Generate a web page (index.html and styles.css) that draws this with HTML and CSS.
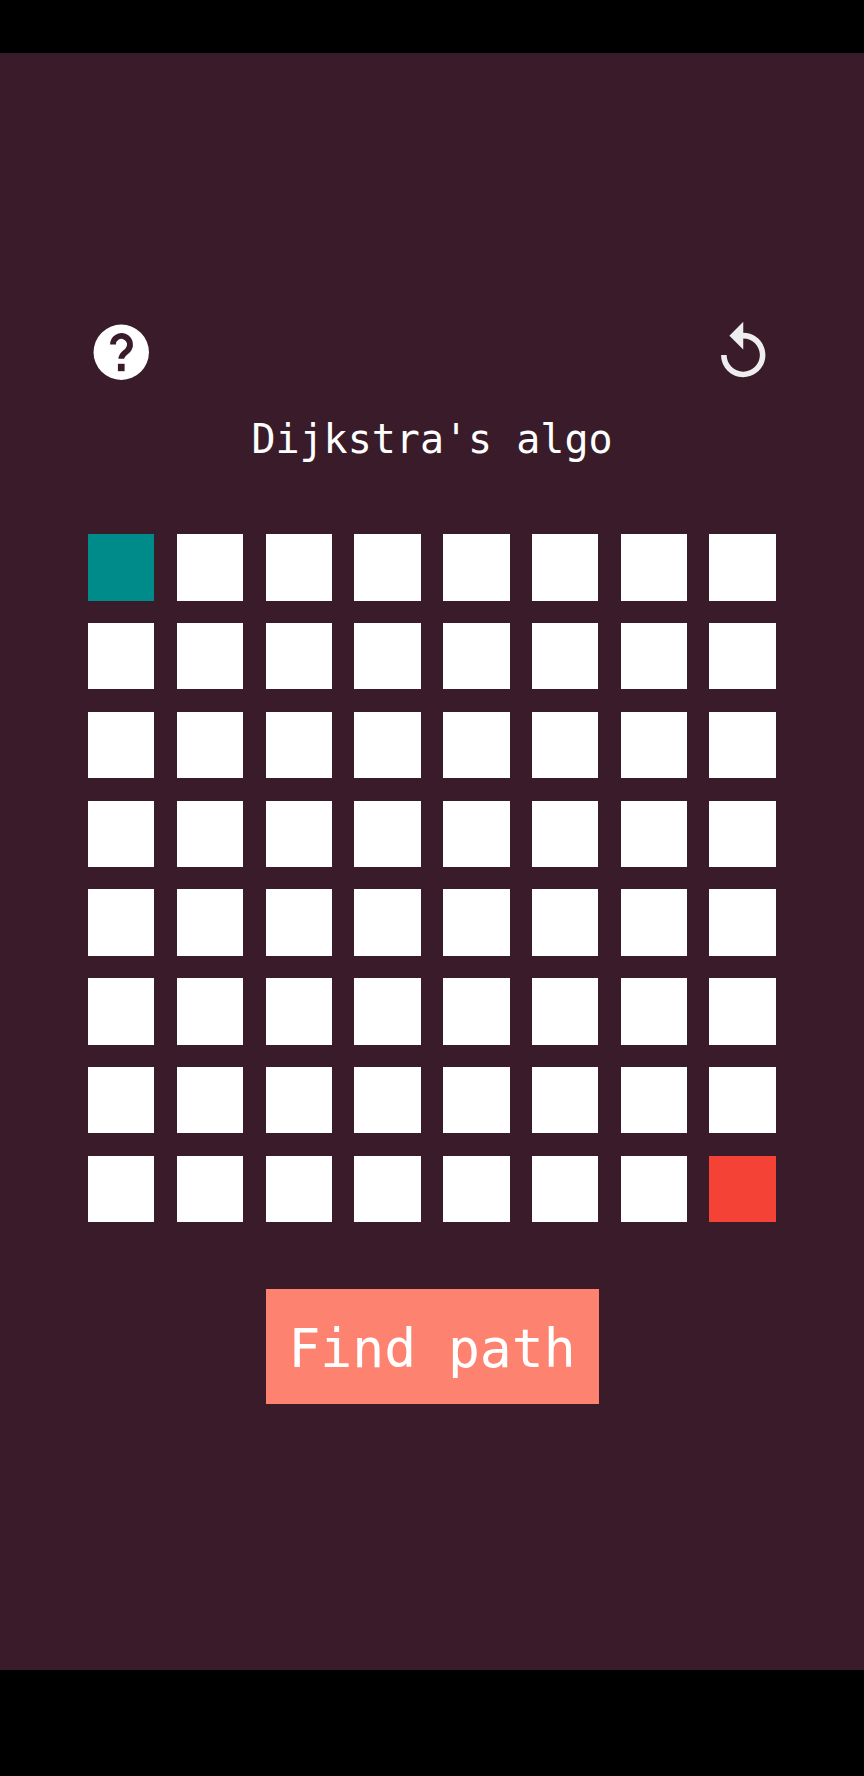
FILE: index.html
```html
<!DOCTYPE html>
<html lang="en">
<head>
    <meta charset="UTF-8">
    <meta name="viewport" content="width=device-width, initial-scale=1.0">
    <title>Dijkstra's algo</title>
    <link rel="stylesheet" href="styles.css">
</head>
<body>

    <div class="screen">
        <div class="toolbar">
            <svg class="icon" viewBox="0 0 66.5 66.5" aria-label="Help">
                <circle cx="33.25" cy="33.25" r="27.7" fill="#fff"/>
                <path class="question" d="M25 25.5a8.5 8.5 0 1 1 14.2 6.3c-3.4 3-5.9 4-5.9 8"/>
                <rect class="question-dot" x="29.9" y="44.8" width="6.7" height="7.4"/>
            </svg>
            <svg class="icon" viewBox="0 0 24 24" aria-label="Reset">
                <path class="replay" d="M12 5V1L7 6l5 5V7c3.31 0 6 2.69 6 6s-2.69 6-6 6-6-2.69-6-6H4c0 4.42 3.58 8 8 8s8-3.58 8-8-3.58-8-8-8z"/>
            </svg>
        </div>

        <h2 class="title">Dijkstra's algo</h2>

        <div class="grid">
            <div class="cell start"></div><div class="cell"></div><div class="cell"></div><div class="cell"></div><div class="cell"></div><div class="cell"></div><div class="cell"></div><div class="cell"></div>
            <div class="cell"></div><div class="cell"></div><div class="cell"></div><div class="cell"></div><div class="cell"></div><div class="cell"></div><div class="cell"></div><div class="cell"></div>
            <div class="cell"></div><div class="cell"></div><div class="cell"></div><div class="cell"></div><div class="cell"></div><div class="cell"></div><div class="cell"></div><div class="cell"></div>
            <div class="cell"></div><div class="cell"></div><div class="cell"></div><div class="cell"></div><div class="cell"></div><div class="cell"></div><div class="cell"></div><div class="cell"></div>
            <div class="cell"></div><div class="cell"></div><div class="cell"></div><div class="cell"></div><div class="cell"></div><div class="cell"></div><div class="cell"></div><div class="cell"></div>
            <div class="cell"></div><div class="cell"></div><div class="cell"></div><div class="cell"></div><div class="cell"></div><div class="cell"></div><div class="cell"></div><div class="cell"></div>
            <div class="cell"></div><div class="cell"></div><div class="cell"></div><div class="cell"></div><div class="cell"></div><div class="cell"></div><div class="cell"></div><div class="cell"></div>
            <div class="cell"></div><div class="cell"></div><div class="cell"></div><div class="cell"></div><div class="cell"></div><div class="cell"></div><div class="cell"></div><div class="cell end"></div>
        </div>

        <button class="find-btn" type="button">Find path</button>
    </div>

</body>
</html>
```

FILE: styles.css
```css
html, body {
    height: 100%;
}
body {
    margin: 0;
    padding: 53px 0 106px;
    box-sizing: border-box;
    background-color: #000;
    font-family: "DejaVu Sans Mono", monospace;
}
.screen {
    height: 1617px;
    padding: 265.5px 88px 0;
    box-sizing: border-box;
    background-color: #391b29;
    color: #fff;
}
.toolbar {
    display: flex;
    justify-content: space-between;
}
.icon {
    display: block;
    width: 66.5px;
    height: 66.5px;
}
.question {
    fill: none;
    stroke: #391b29;
    stroke-width: 5.8;
}
.question-dot {
    fill: #391b29;
}
.replay {
    fill: #eee;
}
.title {
    margin: 22px 0 0;
    font-size: 40px;
    font-weight: normal;
    line-height: 64px;
    text-align: center;
}
.grid {
    display: grid;
    grid-template-columns: repeat(8, 66.4px);
    grid-auto-rows: 66.4px;
    gap: 22.4px;
    margin-top: 63.3px;
}
.cell {
    background-color: #fff;
}
.start {
    background-color: #008b8b;
}
.end {
    background-color: #f44336;
}
.find-btn {
    display: block;
    width: 333px;
    height: 115px;
    margin: 66.7px auto 0;
    padding: 4px 0 0;
    border: none;
    background-color: #fd8270;
    color: #fff;
    font-family: inherit;
    font-size: 53px;
}
```
